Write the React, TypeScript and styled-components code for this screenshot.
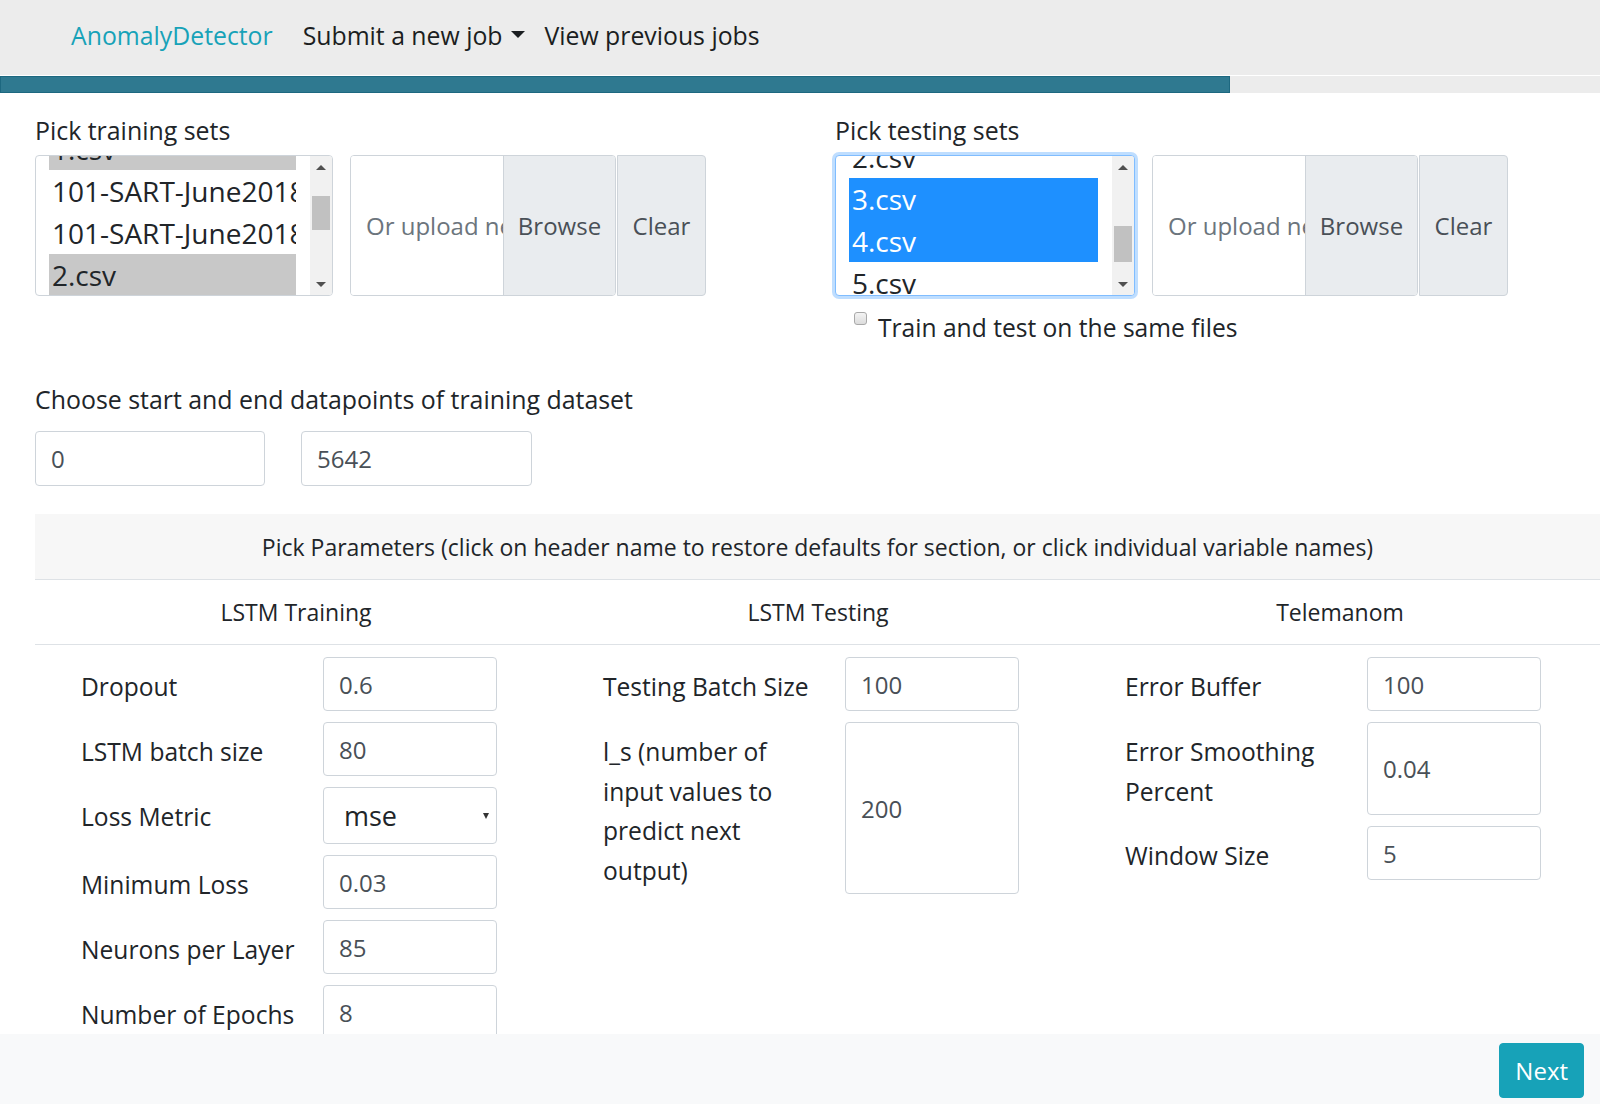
import React from "react";
import styled, { createGlobalStyle } from "styled-components";

const GlobalStyle = createGlobalStyle`
  html, body {
    margin: 0;
    padding: 0;
    background: #fff;
    font-family: "Open Sans", "Noto Sans", sans-serif;
    color: #212529;
  }
  * { box-sizing: border-box; }
`;

const Navbar = styled.nav`
  height: 75px;
  background-color: #ececec;
  display: flex;
  align-items: center;
  padding: 0 0 6px 71px;
  font-size: 24.8px;
`;

const Brand = styled.a`
  color: #17a2b8;
  margin-right: 30px;
  text-decoration: none;
`;

const NavLink = styled.a`
  color: #1b1e21;
  display: flex;
  align-items: center;
  margin-right: 20px;
  text-decoration: none;
`;

const Caret = styled.span`
  display: inline-block;
  margin-left: 8px;
  border-top: 7px solid #1b1e21;
  border-left: 7px solid transparent;
  border-right: 7px solid transparent;
`;

const Progress = styled.div`
  margin-top: 1px;
  height: 17px;
  background-color: #ececec;
  display: flex;
`;

const ProgressFill = styled.div`
  height: 100%;
  background-color: #2f7990;
  border: 1px solid #1d6880;
`;

const Main = styled.main`
  padding: 19px 0 120px 35px;
`;

const SetsRow = styled.div`
  display: grid;
  grid-template-columns: 800px 1fr;
`;

const SetColumn = styled.div`
  display: flex;
  flex-direction: column;
`;

const FieldLabel = styled.div`
  font-size: 24.9px;
  line-height: 36px;
  margin-bottom: 7px;
`;

const PickerRow = styled.div`
  display: flex;
  gap: 17px;
  height: 141px;
`;

const ListBox = styled.div<{ focused?: boolean; width: number }>`
  width: ${(p) => p.width}px;
  height: 141px;
  border: 1px solid ${(p) => (p.focused ? "#80bdff" : "#ced4da")};
  box-shadow: ${(p) => (p.focused ? "0 0 0 3px rgba(0, 123, 255, 0.25)" : "none")};
  border-radius: 4px;
  background: #fff;
  display: flex;
  overflow: hidden;
`;

const OptionsViewport = styled.div`
  flex: 1;
  overflow: hidden;
  padding: 0 14px 0 13px;
`;

const OptionItem = styled.div<{ selected?: boolean; focused?: boolean }>`
  height: 42px;
  line-height: 42px;
  font-size: 28px;
  padding-left: 3px;
  white-space: nowrap;
  overflow: hidden;
  background-color: ${(p) =>
    p.selected ? (p.focused ? "#1e90ff" : "#c8c8c8") : "transparent"};
  color: ${(p) => (p.selected && p.focused ? "#fff" : "#212529")};
`;

const ScrollTrack = styled.div`
  width: 22px;
  background: #f1f1f1;
  display: flex;
  flex-direction: column;
  align-items: center;
  padding-top: 9px;
  padding-bottom: 8px;
`;

const Arrow = styled.span<{ down?: boolean }>`
  width: 0;
  height: 0;
  border-left: 5px solid transparent;
  border-right: 5px solid transparent;
  ${(p) =>
    p.down ? "border-top: 5px solid #505050;" : "border-bottom: 5px solid #505050;"}
`;

const ThumbArea = styled.div`
  flex: 1;
  width: 100%;
  padding: 0 2px;
`;

const Thumb = styled.div`
  width: 100%;
  background: #c1c1c1;
`;

const UploadGroup = styled.div`
  display: flex;
  gap: 1px;
  height: 141px;
`;

const FileBox = styled.div`
  display: flex;
  border: 1px solid #ced4da;
  border-radius: 4px;
  overflow: hidden;
  font-size: 24px;
`;

const FileInput = styled.div`
  width: 152px;
  background: #fff;
  color: #6c757d;
  padding-left: 15px;
  display: flex;
  align-items: center;
  white-space: nowrap;
  overflow: hidden;
`;

const BrowseLabel = styled.div`
  width: 112px;
  background: #e9ecef;
  border-left: 1px solid #ced4da;
  color: #495057;
  display: flex;
  align-items: center;
  justify-content: center;
`;

const ClearButton = styled.button`
  width: 89px;
  border: 1px solid #ced4da;
  border-radius: 0 4px 4px 0;
  background: #e9ecef;
  color: #495057;
  font-family: inherit;
  font-size: 24px;
  padding: 0;
`;

const CheckRow = styled.label`
  display: flex;
  align-items: flex-start;
  margin-top: 14px;
  padding-left: 19px;
  font-size: 24.6px;
  line-height: 36px;
`;

const CheckBox = styled.span`
  width: 13px;
  height: 13px;
  margin-top: 2px;
  margin-right: 11px;
  border: 1px solid #a9a9a9;
  border-radius: 3px;
  background: linear-gradient(#f4f4f4, #dcdcdc);
`;

const RangeSection = styled.section`
  margin-top: 35px;
`;

const RangeInputs = styled.div`
  display: flex;
  gap: 36px;
  margin-top: 14px;
`;

const TextInput = styled.input<{ w?: number }>`
  width: ${(p) => (p.w ? `${p.w}px` : "100%")};
  height: 55px;
  border: 1px solid #ced4da;
  border-radius: 4px;
  padding: 0 15px;
  font-family: inherit;
  font-size: 24px;
  color: #495057;
  background: #fff;
  outline: none;
`;

const ParamsTable = styled.section`
  margin-top: 28px;
`;

const ParamsHeader = styled.div`
  height: 66px;
  background: #f7f7f7;
  border-bottom: 1px solid #dee2e6;
  display: flex;
  align-items: center;
  justify-content: center;
  font-size: 23px;
`;

const ColumnHeads = styled.div`
  display: grid;
  grid-template-columns: repeat(3, 522px);
  height: 65px;
  border-bottom: 1px solid #dee2e6;
`;

const ColumnHead = styled.div`
  display: flex;
  align-items: center;
  justify-content: center;
  font-size: 23px;
`;

const ColumnBodies = styled.div`
  display: grid;
  grid-template-columns: repeat(3, 522px);
  padding-top: 12px;
`;

const ParamColumn = styled.div`
  display: flex;
  flex-direction: column;
  gap: 11px;
  padding-left: 46px;
`;

const ParamRow = styled.div`
  display: flex;
  align-items: stretch;
`;

const ParamLabel = styled.div`
  width: 222px;
  margin-right: 20px;
  padding: 10px 0 4px;
  font-size: 24.6px;
  line-height: 39.5px;
`;

const ParamInput = styled.input`
  width: 174px;
  min-height: 54px;
  border: 1px solid #ced4da;
  border-radius: 4px;
  padding: 0 15px;
  font-family: inherit;
  font-size: 24px;
  color: #495057;
  background: #fff;
  outline: none;
`;

const SelectWrap = styled.div`
  position: relative;
  width: 174px;
  &::after {
    content: "";
    position: absolute;
    right: 8px;
    top: 50%;
    margin-top: -3px;
    border-top: 6px solid #333;
    border-left: 3.5px solid transparent;
    border-right: 3.5px solid transparent;
  }
`;

const ParamSelect = styled.select`
  width: 100%;
  height: 57px;
  appearance: none;
  border: 1px solid #ced4da;
  border-radius: 4px;
  padding: 0 20px;
  font-family: inherit;
  font-size: 27px;
  color: #212529;
  background: #fff;
  outline: none;
`;

const Footer = styled.footer`
  position: fixed;
  left: 0;
  right: 0;
  bottom: 0;
  height: 70px;
  background: #f8f9fa;
  display: flex;
  justify-content: flex-end;
  align-items: flex-start;
  padding: 9px 16px 0 0;
`;

const NextButton = styled.button`
  height: 55px;
  padding: 0 15px;
  background: #17a2b8;
  border: 1px solid #17a2b8;
  border-radius: 4px;
  color: #fff;
  font-family: inherit;
  font-size: 24px;
`;

interface ListProps {
  items: string[];
  selected: number[];
  offset: number;
  focused?: boolean;
  width: number;
  thumbTop: number;
  thumbHeight: number;
}

function FileList({ items, selected, offset, focused, width, thumbTop, thumbHeight }: ListProps) {
  return (
    <ListBox focused={focused} width={width}>
      <OptionsViewport>
        <div style={{ marginTop: -offset }}>
          {items.map((item, i) => (
            <OptionItem key={i} selected={selected.includes(i)} focused={focused}>
              {item}
            </OptionItem>
          ))}
        </div>
      </OptionsViewport>
      <ScrollTrack>
        <Arrow />
        <ThumbArea>
          <Thumb style={{ marginTop: thumbTop, height: thumbHeight }} />
        </ThumbArea>
        <Arrow down />
      </ScrollTrack>
    </ListBox>
  );
}

function Upload() {
  return (
    <UploadGroup>
      <FileBox>
        <FileInput>Or upload new files</FileInput>
        <BrowseLabel>Browse</BrowseLabel>
      </FileBox>
      <ClearButton>Clear</ClearButton>
    </UploadGroup>
  );
}

type Param = { label: string; value: string; select?: boolean };

const training: Param[] = [
  { label: "Dropout", value: "0.6" },
  { label: "LSTM batch size", value: "80" },
  { label: "Loss Metric", value: "mse", select: true },
  { label: "Minimum Loss", value: "0.03" },
  { label: "Neurons per Layer", value: "85" },
  { label: "Number of Epochs", value: "8" },
  { label: "Patience", value: "10" },
  { label: "Validation Split", value: "0.2" },
];

const testing: Param[] = [
  { label: "Testing Batch Size", value: "100" },
  { label: "l_s (number of input values to predict next output)", value: "200" },
];

const telemanom: Param[] = [
  { label: "Error Buffer", value: "100" },
  { label: "Error Smoothing Percent", value: "0.04" },
  { label: "Window Size", value: "5" },
];

function ParamList({ params }: { params: Param[] }) {
  return (
    <ParamColumn>
      {params.map((p) => (
        <ParamRow key={p.label}>
          <ParamLabel>{p.label}</ParamLabel>
          {p.select ? (
            <SelectWrap>
              <ParamSelect defaultValue={p.value}>
                <option value="mse">mse</option>
                <option value="mae">mae</option>
              </ParamSelect>
            </SelectWrap>
          ) : (
            <ParamInput defaultValue={p.value} />
          )}
        </ParamRow>
      ))}
    </ParamColumn>
  );
}

export default function App() {
  return (
    <>
      <GlobalStyle />
      <Navbar>
        <Brand href="#">AnomalyDetector</Brand>
        <NavLink href="#">
          Submit a new job
          <Caret />
        </NavLink>
        <NavLink href="#">View previous jobs</NavLink>
      </Navbar>
      <Progress>
        <ProgressFill style={{ width: `${(1230 / 1600) * 100}%` }} />
      </Progress>
      <Main>
        <SetsRow>
          <SetColumn>
            <FieldLabel>Pick training sets</FieldLabel>
            <PickerRow>
              <FileList
                width={298}
                items={["1.csv", "101-SART-June2018.csv", "101-SART-June2018_2.csv", "2.csv", "3.csv"]}
                selected={[0, 3]}
                offset={28}
                thumbTop={26}
                thumbHeight={34}
              />
              <Upload />
            </PickerRow>
          </SetColumn>
          <SetColumn>
            <FieldLabel>Pick testing sets</FieldLabel>
            <PickerRow>
              <FileList
                width={300}
                focused
                items={["2.csv", "3.csv", "4.csv", "5.csv"]}
                selected={[1, 2]}
                offset={20}
                thumbTop={56}
                thumbHeight={36}
              />
              <Upload />
            </PickerRow>
            <CheckRow>
              <CheckBox />
              Train and test on the same files
            </CheckRow>
          </SetColumn>
        </SetsRow>
        <RangeSection>
          <FieldLabel>Choose start and end datapoints of training dataset</FieldLabel>
          <RangeInputs>
            <TextInput w={230} defaultValue="0" />
            <TextInput w={231} defaultValue="5642" />
          </RangeInputs>
        </RangeSection>
        <ParamsTable>
          <ParamsHeader>
            Pick Parameters (click on header name to restore defaults for section, or click individual variable names)
          </ParamsHeader>
          <ColumnHeads>
            <ColumnHead>LSTM Training</ColumnHead>
            <ColumnHead>LSTM Testing</ColumnHead>
            <ColumnHead>Telemanom</ColumnHead>
          </ColumnHeads>
          <ColumnBodies>
            <ParamList params={training} />
            <ParamList params={testing} />
            <ParamList params={telemanom} />
          </ColumnBodies>
        </ParamsTable>
      </Main>
      <Footer>
        <NextButton>Next</NextButton>
      </Footer>
    </>
  );
}
